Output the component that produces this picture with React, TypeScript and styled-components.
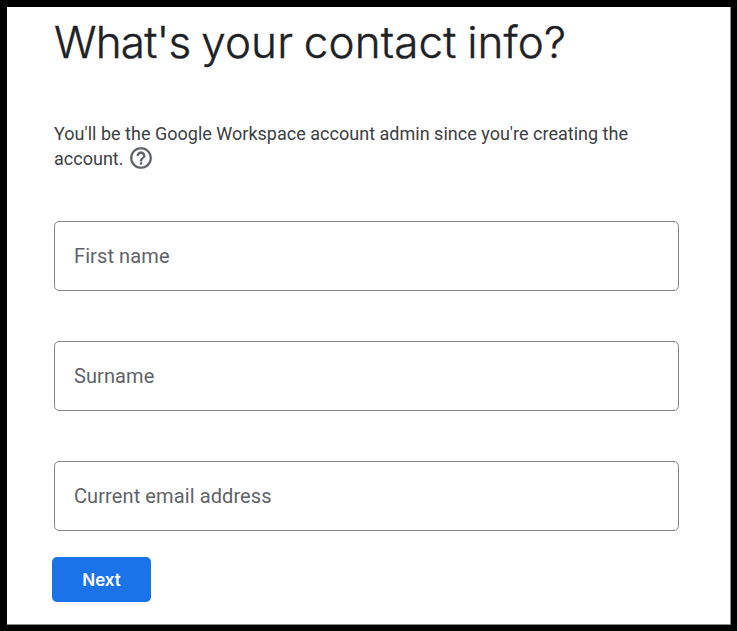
import React from "react";
import styled, { createGlobalStyle } from "styled-components";

const GlobalStyle = createGlobalStyle`
  *, *::before, *::after { box-sizing: border-box; }
  html, body { margin: 0; padding: 0; background: #000; overflow: hidden; }
  input::placeholder { color: #5f6368; opacity: 1; }
`;

const Frame = styled.div`
  width: 737px;
  height: 631px;
  padding: 7px 6px 6px 7px;
  background: #000;
`;

const Panel = styled.main`
  height: 618px;
  padding: 0 51px 0 47px;
  background: #fff;
  border-right: 1px solid #8b8b8b;
  border-bottom: 1px solid #8b8b8b;
  display: flex;
  flex-direction: column;
  align-items: flex-start;
`;

const Title = styled.h1`
  margin: 7px 0 0;
  height: 56px;
  font: 300 44px/56px Inter, "Liberation Sans", sans-serif;
  letter-spacing: 0.12px;
  word-spacing: -1.8px;
  color: #202124;
  -webkit-text-stroke: 0.4px #202124;
  white-space: nowrap;
`;

const TightWord = styled.span`
  letter-spacing: -0.8px;
`;

const Intro = styled.p`
  margin: 51px 0 0;
  height: 50px;
  font: 400 18px/25px Roboto, "Liberation Sans", sans-serif;
  letter-spacing: 0.015px;
  color: #3c4043;
  white-space: nowrap;
`;

const HelpIcon = styled.svg`
  width: 26px;
  height: 26px;
  margin: -2px 0 -6px 4px;
  vertical-align: baseline;
  fill: #5f6368;
  stroke: #5f6368;
  stroke-width: 0.2;
`;

const Form = styled.form`
  display: flex;
  flex-direction: column;
  align-items: flex-start;
  margin-top: 50px;
  gap: 50px;
`;

const Field = styled.input`
  width: 625px;
  height: 70px;
  padding: 0 19px;
  border: 1px solid #80868b;
  border-radius: 5px;
  outline: none;
  background: transparent;
  color: #202124;
  font: 400 20px Roboto, "Liberation Sans", sans-serif;
  letter-spacing: 0.1px;
`;

const NextButton = styled.button`
  width: 99px;
  height: 45px;
  margin: -24px 0 0 -2px;
  padding: 0;
  border: 0;
  border-radius: 5px;
  background: #1a73e8;
  color: #fff;
  font: 600 17px Inter, "Liberation Sans", sans-serif;
`;

const fields = ["First name", "Surname", "Current email address"];

export default function App() {
  return (
    <Frame>
      <GlobalStyle />
      <Panel>
        <Title>
          <TightWord>What's</TightWord> your contact info?
        </Title>
        <Intro>
          You'll be the Google Workspace account admin since you're creating the
          <br />
          account.
          <HelpIcon viewBox="0 0 24 24" aria-label="Help">
            <path d="M11 18h2v-2h-2v2zm1-16C6.480 2 2 6.480 2 12s4.480 10 10 10 10-4.480 10-10S17.520 2 12 2zm0 18c-4.410 0-8-3.590-8-8s3.590-8 8-8 8 3.590 8 8-3.590 8-8 8zm0-14c-2.210 0-4 1.790-4 4h2c0-1.100.9-2 2-2s2 .9 2 2c0 2-3 1.750-3 5h2c0-2.250 3-2.500 3-5 0-2.210-1.790-4-4-4z" />
          </HelpIcon>
        </Intro>
        <Form onSubmit={(e) => e.preventDefault()}>
          {fields.map((name) => (
            <Field key={name} placeholder={name} aria-label={name} />
          ))}
          <NextButton type="submit">Next</NextButton>
        </Form>
      </Panel>
    </Frame>
  );
}
